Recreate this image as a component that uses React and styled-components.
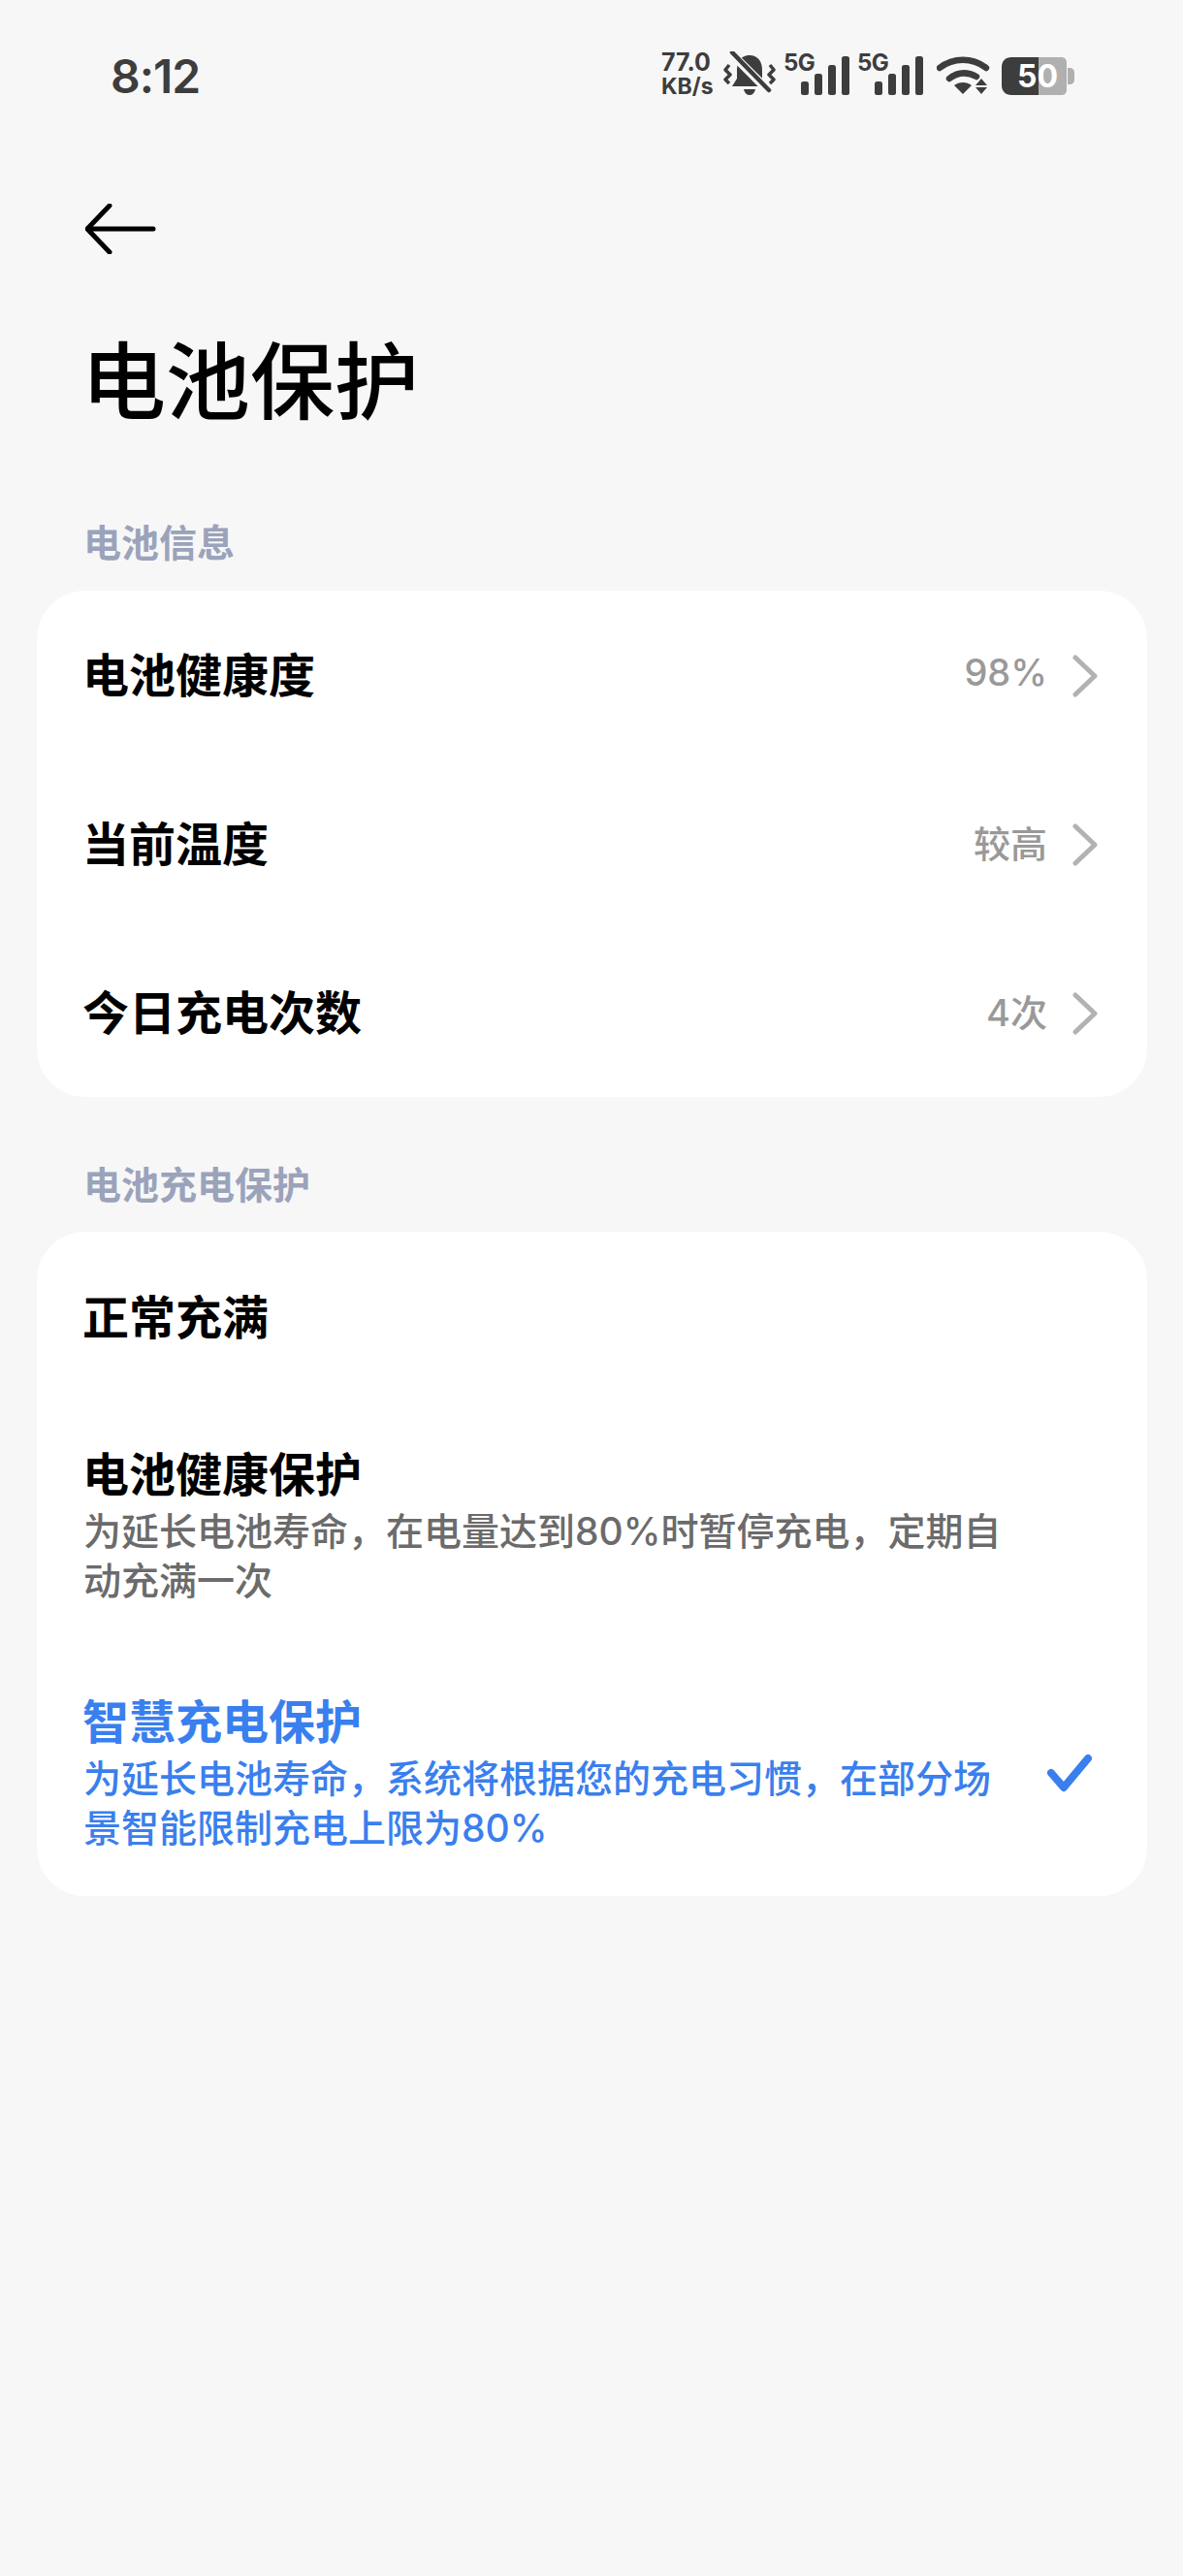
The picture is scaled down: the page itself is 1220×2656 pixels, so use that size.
import React from "react";
import styled, { createGlobalStyle } from "styled-components";

const CJK = `"Noto Sans CJK SC", "Noto Sans", sans-serif`;
const LATIN = `Inter, "Noto Sans CJK SC", sans-serif`;

const Global = createGlobalStyle`
  html, body {
    margin: 0;
    padding: 0;
    background: #f7f7f7;
  }
  * {
    box-sizing: border-box;
  }
`;

const Page = styled.div`
  width: 1220px;
  height: 2656px;
  overflow: hidden;
  background: #f7f7f7;
  font-family: ${CJK};
`;

const StatusBar = styled.div`
  height: 160px;
  padding: 50px 112px 0 114px;
  display: flex;
  justify-content: space-between;
  align-items: flex-start;
  color: #3d3d3d;
`;

const Clock = styled.div`
  font-family: ${LATIN};
  font-size: 48px;
  line-height: 58px;
  font-weight: 600;
  letter-spacing: -1px;
`;

const StatusIcons = styled.div`
  display: flex;
  align-items: flex-start;
  padding-top: 3px;
`;

const Speed = styled.div`
  width: 64px;
  margin-top: -1px;
  font-family: ${LATIN};
  font-weight: 700;
  text-align: left;
  white-space: nowrap;
`;

const SpeedLine = styled.div`
  font-size: ${(p) => p.$size}px;
  line-height: 25px;
`;

const Signal = styled.div`
  position: relative;
  width: 67px;
  height: 48px;
  margin-left: ${(p) => p.$gap}px;
`;

const SignalLabel = styled.span`
  position: absolute;
  left: 0;
  top: -1px;
  font-family: ${LATIN};
  font-size: 24px;
  line-height: 26px;
  font-weight: 700;
  letter-spacing: -0.5px;
`;

const SignalBars = styled.svg`
  position: absolute;
  left: 18px;
  top: 5px;
`;

const Glyph = styled.svg`
  display: block;
  flex: none;
  margin-left: ${(p) => p.$gap || 0}px;
  margin-top: ${(p) => p.$top || 0}px;
`;

const Battery = styled.div`
  position: relative;
  width: 75px;
  height: 39px;
  margin-left: 11px;
  margin-top: 6px;
`;

const BatteryLabel = styled.span`
  position: absolute;
  left: 16px;
  top: 0;
  font-family: ${LATIN};
  font-size: 32px;
  line-height: 39px;
  font-weight: 700;
  color: #fff;
`;

const BackBar = styled.div`
  height: 152px;
  padding: 50px 0 0 88px;
`;

const TitleWrap = styled.div`
  padding: 10px 0 0 84px;
  height: 220px;
`;

const Title = styled.h1`
  margin: 0;
  font-size: 87px;
  line-height: 132px;
  font-weight: 500;
  color: #000;
`;

const SectionLabel = styled.div`
  padding-left: 86px;
  height: ${(p) => p.$height}px;
  font-size: 39px;
  line-height: 50px;
  font-weight: 700;
  color: #9ba3bb;
`;

const Card = styled.section`
  margin: 0 37px 0 38px;
  background: #fff;
  border-radius: 50px;
  margin-bottom: ${(p) => p.$after || 0}px;
`;

const LinkRow = styled.div`
  height: 174px;
  padding: 0 51px 6px 47px;
  display: flex;
  align-items: center;
`;

const PlainRow = styled.div`
  height: 177px;
  padding: 0 57px 8px 47px;
  display: flex;
  align-items: center;
`;

const OptionRow = styled.div`
  padding: 44px 57px ${(p) => (p.$active ? 45 : 47)}px 47px;
  display: flex;
  align-items: center;
  color: ${(p) => (p.$active ? "#3a7fee" : "#000")};
`;

const RowText = styled.div`
  flex: 1;
  min-width: 0;
`;

const RowTitle = styled.div`
  font-size: 48px;
  line-height: 52px;
  font-weight: 700;
  color: inherit;
`;

const RowValue = styled.span`
  font-family: ${LATIN};
  font-size: 38px;
  font-weight: 500;
  color: #999;
  margin-right: 26px;
`;

const ChevronIcon = styled.svg`
  display: block;
  flex: none;
  margin-top: 7px;
`;

const RowDesc = styled.div`
  width: 965px;
  margin-top: 10px;
  margin-left: 1px;
  font-family: ${LATIN};
  font-size: 39px;
  line-height: 51px;
  font-weight: 500;
  color: ${(p) => (p.$active ? "#3a7fee" : "#6b6b6b")};
`;

const Chevron = () => (
  <ChevronIcon width="26" height="44" viewBox="0 0 26 44" fill="none">
    <path d="M3 3 L23 22 L3 41" stroke="#b2b2b2" strokeWidth="5" strokeLinecap="round" strokeLinejoin="round" />
  </ChevronIcon>
);

const Bars = () => (
  <SignalBars width="50" height="40" viewBox="0 0 50 40" fill="#3d3d3d">
    <rect x="0" y="26" width="8" height="14" rx="2.5" />
    <rect x="14" y="18" width="8" height="22" rx="2.5" />
    <rect x="28" y="9" width="8" height="31" rx="2.5" />
    <rect x="42" y="0" width="8" height="40" rx="2.5" />
  </SignalBars>
);

const App = () => {
  const links = [
    ["电池健康度", "98%"],
    ["当前温度", "较高"],
    ["今日充电次数", "4次"],
  ];

  return (
    <Page>
      <Global />
      <StatusBar>
        <Clock>8:12</Clock>
        <StatusIcons>
          <Speed>
            <SpeedLine $size={25}>77.0</SpeedLine>
            <SpeedLine $size={23}>KB/s</SpeedLine>
          </Speed>
          <Glyph width="54" height="48" viewBox="0 0 54 48" fill="none">
            <path d="M27 4c-9 0-13 7-13 15v9l-5 8h36l-5-8v-9C40 11 36 4 27 4Z" fill="#3d3d3d" />
            <path d="M21 39h12c-1 4-3 6-6 6s-5-2-6-6Z" fill="#3d3d3d" />
            <path d="M7 1 47 41" stroke="#f7f7f7" strokeWidth="9" />
            <path d="M9 1 47 40" stroke="#3d3d3d" strokeWidth="4.5" strokeLinecap="round" />
            <path d="M6 14 2 19l5 5-5 5 4 4M48 14l4 5-5 5 5 5-4 4" stroke="#3d3d3d" strokeWidth="3.5" strokeLinejoin="round" />
          </Glyph>
          <Signal $gap={8}>
            <SignalLabel>5G</SignalLabel>
            <Bars />
          </Signal>
          <Signal $gap={9}>
            <SignalLabel>5G</SignalLabel>
            <Bars />
          </Signal>
          <Glyph width="56" height="40" viewBox="0 0 56 40" $gap={15} $top={5} fill="none">
            <path d="M3 12C17 1 37 1 51 12" stroke="#3d3d3d" strokeWidth="6.5" strokeLinecap="round" />
            <path d="M13 23c9-7 19-7 28-2" stroke="#3d3d3d" strokeWidth="6.5" strokeLinecap="round" />
            <path d="M18 30c5-4 13-4 18 0l-9 9Z" fill="#3d3d3d" />
            <path d="M46 23l6 7H40ZM40 32h12l-6 7Z" fill="#3d3d3d" />
          </Glyph>
          <Battery>
            <Glyph width="75" height="39" viewBox="0 0 75 39">
              <path d="M38 0h23c4 0 6 2 6 6v27c0 4-2 6-6 6H38Z" fill="#b0b0b0" />
              <path d="M68 11h2c3 0 5 2 5 5v7c0 3-2 5-5 5h-2Z" fill="#b0b0b0" />
              <path d="M10 0h28v39H10C4 39 0 35 0 29V10C0 4 4 0 10 0Z" fill="#3d3d3d" />
            </Glyph>
            <BatteryLabel>50</BatteryLabel>
          </Battery>
        </StatusIcons>
      </StatusBar>

      <BackBar>
        <Glyph width="73" height="52" viewBox="0 0 73 52" fill="none">
          <path d="M25 2 2 26 25 50M2 26H70" stroke="#000" strokeWidth="5" strokeLinecap="round" strokeLinejoin="round" />
        </Glyph>
      </BackBar>

      <TitleWrap>
        <Title>电池保护</Title>
      </TitleWrap>

      <SectionLabel $height={77}>电池信息</SectionLabel>
      <Card $after={63}>
        {links.map(([label, value]) => (
          <LinkRow key={label}>
            <RowText>
              <RowTitle>{label}</RowTitle>
            </RowText>
            <RowValue>{value}</RowValue>
            <Chevron />
          </LinkRow>
        ))}
      </Card>

      <SectionLabel $height={76}>电池充电保护</SectionLabel>
      <Card>
        <PlainRow>
          <RowText>
            <RowTitle>正常充满</RowTitle>
          </RowText>
        </PlainRow>
        <OptionRow>
          <RowText>
            <RowTitle>电池健康保护</RowTitle>
            <RowDesc>为延长电池寿命，在电量达到80%时暂停充电，定期自动充满一次</RowDesc>
          </RowText>
        </OptionRow>
        <OptionRow $active>
          <RowText>
            <RowTitle>智慧充电保护</RowTitle>
            <RowDesc $active>为延长电池寿命，系统将根据您的充电习惯，在部分场景智能限制充电上限为80%</RowDesc>
          </RowText>
          <svg width="46" height="40" viewBox="0 0 46 40" fill="none">
            <path d="M4 20 17 35 42 5" stroke="#3a7fee" strokeWidth="8" strokeLinecap="round" strokeLinejoin="round" />
          </svg>
        </OptionRow>
      </Card>
    </Page>
  );
};

export default App;
